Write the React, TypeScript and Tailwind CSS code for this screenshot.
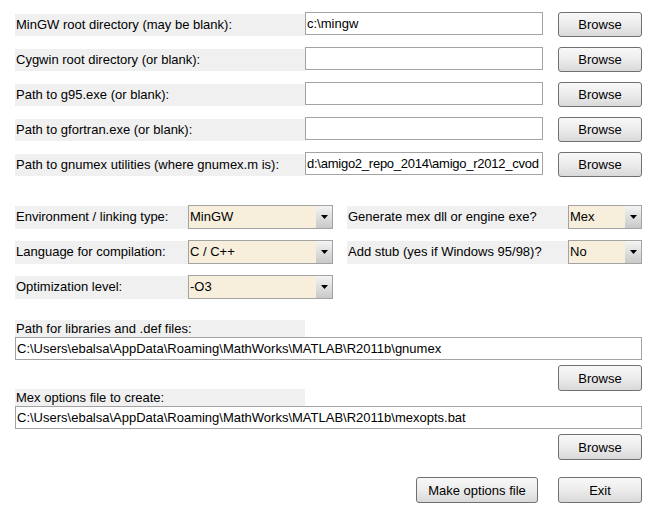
import React from 'react';

const topRows = [
  { label: 'MinGW root directory (may be blank):', value: 'c:\\mingw' },
  { label: 'Cygwin root directory (or blank):', value: '' },
  { label: 'Path to g95.exe (or blank):', value: '' },
  { label: 'Path to gfortran.exe (or blank):', value: '' },
  { label: 'Path to gnumex utilities (where gnumex.m is):', value: 'd:\\amigo2_repo_2014\\amigo_r2012_cvod' },
];

function Button({ children, className = '' }: { children: React.ReactNode; className?: string }) {
  return (
    <button
      className={`h-[25px] rounded-[3px] border border-[#707070] bg-gradient-to-b from-[#f8f8f8] via-[#ececec] to-[#d9d9d9] text-[13px] text-black leading-none ${className}`}
    >
      {children}
    </button>
  );
}

function Field({ value, className = '' }: { value: string; className?: string }) {
  return (
    <div
      className={`h-[23px] border border-[#a3a3a3] bg-white pl-[1px] flex items-center overflow-hidden whitespace-nowrap text-[13px] text-black ${className}`}
    >
      {value}
    </div>
  );
}

function Select({ value, className = '' }: { value: string; className?: string }) {
  return (
    <div className={`h-[24px] border border-[#a3a3a3] bg-[#f7efdc] flex items-stretch ${className}`}>
      <div className="flex-1 flex items-center pl-[1px] text-[13px] text-black">{value}</div>
      <div className="w-[16px] bg-gradient-to-b from-[#f4f4f4] to-[#c9c9c9] flex items-center justify-center">
        <svg width="7" height="4" viewBox="0 0 7 4">
          <path d="M0 0h7L3.5 4z" fill="#000" />
        </svg>
      </div>
    </div>
  );
}

function Label({ text, className = '' }: { text: string; className?: string }) {
  return (
    <div className={`bg-[#f0f0f0] flex items-center pl-[1px] text-[13px] text-black whitespace-nowrap ${className}`}>
      {text}
    </div>
  );
}

export default function App() {
  return (
    <div
      className="w-[654px] h-[513px] bg-white overflow-hidden relative"
      style={{ fontFamily: '"Liberation Sans", Arial, sans-serif' }}
    >
      {/* Directory rows */}
      <div className="pt-[12px] flex flex-col gap-[11px]">
        {topRows.map((row, i) => (
          <div key={row.label} className="h-[24px] flex items-center">
            <Label text={row.label} className="ml-[15px] w-[290px] h-[22px] mt-[1px]" />
            <Field
              value={row.value}
              className={`w-[238px] h-[23px] -mt-[1px] ${i === 4 ? 'tracking-[-0.25px]' : ''}`}
            />
            <Button className="ml-[15px] w-[84px]">Browse</Button>
          </div>
        ))}
      </div>

      {/* Options */}
      <div className="mt-[29px] flex flex-col gap-[11px]">
        <div className="h-[24px] flex items-center">
          <Label text="Environment / linking type:" className="ml-[15px] w-[173px] h-[23px]" />
          <Select value="MinGW" className="w-[145px]" />
          <Label text="Generate mex dll or engine exe?" className="ml-[14px] w-[221px] h-[23px]" />
          <Select value="Mex" className="w-[74px]" />
        </div>
        <div className="h-[24px] flex items-center">
          <Label text="Language for compilation:" className="ml-[15px] w-[173px] h-[23px]" />
          <Select value="C / C++" className="w-[145px]" />
          <Label text="Add stub (yes if Windows 95/98)?" className="ml-[14px] w-[221px] h-[23px]" />
          <Select value="No" className="w-[74px]" />
        </div>
        <div className="h-[24px] flex items-center">
          <Label text="Optimization level:" className="ml-[15px] w-[173px] h-[23px]" />
          <Select value="-O3" className="w-[145px]" />
        </div>
      </div>

      {/* Output paths */}
      <div className="mt-[21px] px-[15px] pr-[12px] flex flex-col">
        <Label text="Path for libraries and .def files:" className="w-[290px] h-[17px]" />
        <Field value="C:\Users\ebalsa\AppData\Roaming\MathWorks\MATLAB\R2011b\gnumex" className="w-full" />
        <div className="flex justify-end mt-[5px]">
          <Button className="w-[84px] h-[26px]">Browse</Button>
        </div>
        <Label text="Mex options file to create:" className="w-[290px] h-[17px] -mt-[2px]" />
        <Field value="C:\Users\ebalsa\AppData\Roaming\MathWorks\MATLAB\R2011b\mexopts.bat" className="w-full" />
        <div className="flex justify-end mt-[5px]">
          <Button className="w-[84px] h-[26px]">Browse</Button>
        </div>
        <div className="flex justify-end gap-[20px] mt-[17px]">
          <Button className="w-[122px] h-[26px]">Make options file</Button>
          <Button className="w-[84px] h-[26px]">Exit</Button>
        </div>
      </div>
    </div>
  );
}
